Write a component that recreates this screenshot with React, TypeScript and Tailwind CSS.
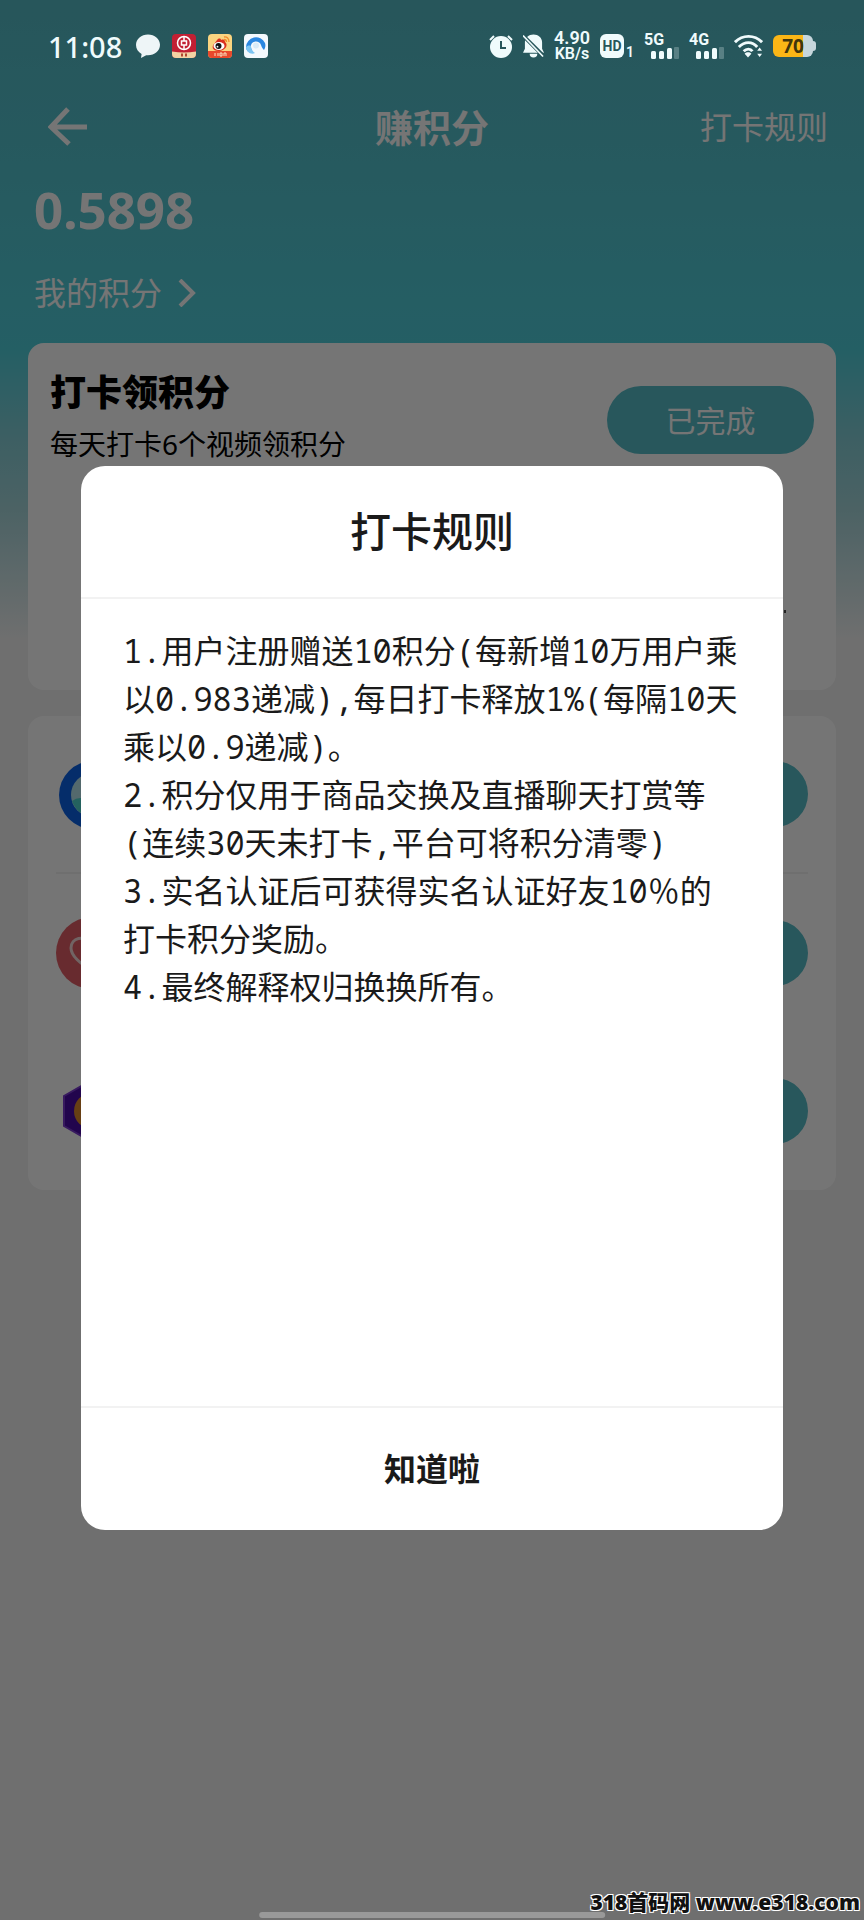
import { useState } from "react";
import type { ReactNode } from "react";

type Task = {
  id: string;
  label: string;
  icon: ReactNode;
};

const rules = [
  "1.用户注册赠送10积分(每新增10万用户乘以0.983递减),每日打卡释放1%(每隔10天乘以0.9递减)。",
  "2.积分仅用于商品交换及直播聊天打赏等(连续30天未打卡,平台可将积分清零)",
  "3.实名认证后可获得实名认证好友10％的打卡积分奖励。",
  "4.最终解释权归换换所有。",
];

const tasks: Task[] = [
  { id: "browse", label: "浏览", icon: <RingIcon /> },
  { id: "like", label: "点赞", icon: <HeartIcon /> },
  { id: "coin", label: "积分", icon: <HexIcon /> },
];

export default function App() {
  const [open, setOpen] = useState(true);

  return (
    <div className="relative flex min-h-screen flex-col bg-[#f2f2f2] bg-[linear-gradient(to_bottom,#55bbc6_0px,#54c5d0_180px,#50cfdb_350px,#86d0d7_440px,#a6d6db_510px,#f2f2f2_640px)] font-['Noto_Sans','Noto_Sans_CJK_SC',sans-serif]">
      <StatusBar />

      <header className="flex h-[118px] items-center justify-between px-9 text-white">
        <button type="button" aria-label="返回" className="flex w-32 justify-start pl-3">
          <svg width="40" height="40" viewBox="0 0 40 40" fill="none" stroke="currentColor" strokeWidth="5">
            <path d="M20 2 3 20l18 17M3 20h36" />
          </svg>
        </button>
        <h1 className="text-[38px] leading-none font-bold">赚积分</h1>
        <button type="button" onClick={() => setOpen(true)} className="w-32 text-[32px] leading-none whitespace-nowrap">
          打卡规则
        </button>
      </header>

      <section className="flex flex-col items-start pl-[34px] text-white">
        <p className="text-[51px] leading-[46px] font-bold">0.5898</p>
        <a href="#points" className="mt-10 flex items-center gap-4 text-[32px] leading-[42px]">
          我的积分
          <svg width="18" height="28" viewBox="0 0 18 28" fill="none" stroke="currentColor" strokeWidth="4">
            <path d="m2 1 13 13L2 27" />
          </svg>
        </a>
      </section>

      <section className="mx-7 mt-[29px] flex min-h-[347px] flex-col rounded-2xl bg-white px-[22px]">
        <div className="flex items-start justify-between pt-7">
          <div className="text-black">
            <h2 className="text-[36px] leading-[44px] font-black">打卡领积分</h2>
            <p className="mt-2 text-[28px] leading-[42px]">每天打卡6个视频领积分</p>
          </div>
          <button type="button" className="mt-[15px] h-[68px] w-[207px] rounded-full bg-[#57bdc8] text-[30px] text-white">
            已完成
          </button>
        </div>
        <span className="mt-auto mr-7 mb-[77px] ml-auto h-[3px] w-0.5 bg-black/70" />
      </section>

      <ul className="mx-7 mt-[26px] rounded-2xl bg-white px-7">
        {tasks.map((task) => (
          <li key={task.id} className="flex h-[158px] items-center justify-between first:border-b-2 first:border-[#f2f2f2]">
            {task.icon}
            <button type="button" aria-label={task.label} className="h-[66px] w-[207px] rounded-full bg-[#57bdc8]" />
          </li>
        ))}
      </ul>

      {open ? <RulesDialog onClose={() => setOpen(false)} /> : null}

      <div className="absolute bottom-[2px] left-1/2 h-1.5 w-2/5 -translate-x-1/2 rounded-full bg-[#999999]" />
      <p className="absolute right-1 bottom-1 text-[21px] leading-7 font-black whitespace-nowrap text-[#111111] [text-shadow:1px_1px_0_#fff,-1px_1px_0_#fff,1px_-1px_0_#fff,-1px_-1px_0_#fff]">
        318首码网 www.e318.com
      </p>
    </div>
  );
}

function RulesDialog({ onClose }: { onClose: () => void }) {
  return (
    <div className="absolute inset-0 flex items-center justify-center bg-black/54 px-[81px] pt-19">
      <div role="dialog" aria-labelledby="rules-title" className="w-full rounded-3xl bg-white text-[#1a1a1a]">
        <h2 id="rules-title" className="border-b-2 border-[#f2f2f2] py-[41px] text-center text-[41px] leading-[49px] font-medium">
          打卡规则
        </h2>
        <div className="min-h-[807px] px-[42px] pt-7 font-['Noto_Sans_Mono','Liberation_Mono','Noto_Sans_CJK_SC',monospace] text-[32px] leading-[48px]">
          {rules.map((rule) => (
            <p key={rule}>{rule}</p>
          ))}
        </div>
        <button type="button" onClick={onClose} className="w-full border-t-2 border-[#f2f2f2] py-9 text-[32px] leading-[50px] font-bold">
          知道啦
        </button>
      </div>
    </div>
  );
}

function StatusBar() {
  return (
    <div className="relative z-10 flex items-center justify-between px-12 pt-6 text-[#f0fbfc]">
      <div className="flex h-11 items-center gap-3">
        <span className="mr-0.5 text-[29px] leading-none font-medium">11:08</span>
        <svg width="24" height="24" viewBox="0 0 24 24" fill="#eef5f7">
          <path d="M12 .5C5.400.5 0 5 0 11c0 4 2.200 7 5.600 8.900L5 24l5.200-2.800c.6.1 1.200.1 1.800.1 6.600 0 12-4.600 12-10.500S18.600.5 12 .5Z" />
        </svg>
        <BankIcon />
        <WeiboIcon />
        <BrowserIcon />
      </div>

      <div className="flex h-11 items-center gap-2.5">
        <svg width="24" height="24" viewBox="0 0 24 24">
          <circle cx="12" cy="13" r="11" fill="currentColor" />
          <path d="m1 6 4-4m14 0 4 4" stroke="currentColor" strokeWidth="2" />
          <path d="M12 7v7h5" fill="none" stroke="#27565b" strokeWidth="2" />
        </svg>
        <svg width="21" height="24" viewBox="0 0 22 24">
          <path d="M11 0c5 0 9 3.500 9 8v7l2 4H0l2-4V8c0-4.500 4-8 9-8ZM7 20h8a4 4 0 0 1-8 0Z" fill="currentColor" />
          <path d="m0 1 22 22" stroke="#27565b" strokeWidth="4" />
          <path d="m0 1 21 22" stroke="currentColor" strokeWidth="1.800" />
        </svg>
        <div className="flex flex-col items-center font-[Roboto,sans-serif] text-[16px] leading-4 font-semibold">
          <span className="text-[18px]">4.90</span>
          <span>KB/s</span>
        </div>
        <div className="flex items-end gap-0.5 font-[Roboto,sans-serif]">
          <span className="flex size-6 items-center justify-center rounded-md bg-[#f0fbfc] text-[14px] font-bold text-[#27565b]">HD</span>
          <span className="text-[14px] leading-3 font-semibold">1</span>
        </div>
        <Signal label="5G" />
        <Signal label="4G" />
        <svg width="29" height="24" viewBox="0 0 30 24" fill="none" stroke="currentColor" strokeWidth="3">
          <path d="M1 8c8-8 20-8 28 0M5 13c6-6 14-6 19 0M10 17.500c3-3 7-3 9 0" />
          <path d="m11 20 3.500 4 3.500-4c-2-2-5-2-7 0Z" fill="currentColor" stroke="none" />
          <path d="m24 17 2.500-3.500L29 17Zm0 3 2.500 3.500L29 20Z" fill="currentColor" stroke="none" />
        </svg>
        <div className="flex items-center">
          <span className="flex h-[22px] w-10 items-center justify-center rounded-md bg-[linear-gradient(to_right,#fbb616_75%,#c6d6dc_75%)] text-[19px] leading-none font-bold text-[#40350c]">
            70
          </span>
          <span className="h-2.5 w-[3px] rounded-r-sm bg-[#c6d6dc]" />
        </div>
      </div>
    </div>
  );
}

function Signal({ label }: { label: string }) {
  return (
    <div className="flex w-[35px] flex-col">
      <span className="font-[Roboto,sans-serif] text-[16px] leading-[14px] font-bold">{label}</span>
      <svg width="35" height="12" viewBox="0 0 35 12" fill="currentColor">
        <rect x="7" y="4" width="5" height="8" rx="1.500" />
        <rect x="15" y="4" width="5" height="8" rx="1.500" />
        <rect x="23" y="1" width="5" height="11" rx="1.500" />
        <rect x="30" y="0" width="5" height="12" rx="1" opacity=".25" />
      </svg>
    </div>
  );
}

function BankIcon() {
  return (
    <svg width="24" height="24" viewBox="0 0 24 24">
      <rect width="24" height="24" rx="4" fill="#c21f33" />
      <path d="M0 17.500q12 2 24 0V20a4 4 0 0 1-4 4H4a4 4 0 0 1-4-4Z" fill="#f3d3a4" />
      <g fill="none" stroke="#fff" strokeWidth="1.500">
        <circle cx="12" cy="9" r="6.500" />
        <rect x="9.500" y="7" width="5" height="4" />
        <path d="M12 2.500V7m0 4v4.500" />
      </g>
      <path d="M9 19.500h2v3H9zm4 0h2v3h-2z" fill="#b0472f" />
    </svg>
  );
}

function WeiboIcon() {
  return (
    <svg width="24" height="24" viewBox="0 0 24 24">
      <rect width="24" height="24" rx="4" fill="#fbd480" />
      <path d="M0 17h24v3a4 4 0 0 1-4 4H4a4 4 0 0 1-4-4Z" fill="#e9482c" />
      <path d="M10 5c2-1 3 0 3 1 3-1 4 0 4 2 3 2 2 8-6 9-7 0-8-5-4-8 1-2 2-3 3-4Z" fill="#d9301f" />
      <ellipse cx="11" cy="12" rx="5.500" ry="4" fill="#fff" />
      <circle cx="10.500" cy="12" r="3" fill="#161616" />
      <circle cx="9.500" cy="12.700" r=".9" fill="#fff" />
      <path d="M16 3c3-.500 5 1.500 5 5m-5-2.500c1.500 0 2.500 1 2.500 2.500" fill="none" stroke="#ef8b2c" strokeWidth="1.300" />
      <path d="M7 19v3m3-3v3m2-3h2v3h-2Zm4 3v-3h2v3" fill="none" stroke="#fbe3c5" />
    </svg>
  );
}

function BrowserIcon() {
  return (
    <svg width="24" height="24" viewBox="0 0 24 24">
      <rect width="24" height="24" rx="4" fill="#f4f9fd" />
      <path d="M2 13a10 10 0 0 1 19-4c1 3 0 5-1 7-1-1-2-2-3-5-1-4-8-5-10 0-.5 3 1 5 2 7-4 2-7-2-7-5Z" fill="#2b87e0" />
      <path d="M2 13c0 5 5 8 9 6-3-2-4-4-4-7-2-1-4 0-5 1Z" fill="#7cc4f2" />
      <circle cx="12" cy="11.500" r="3" fill="#d9ebf8" />
    </svg>
  );
}

function RingIcon() {
  return (
    <svg width="72" height="72" viewBox="0 0 72 72">
      <circle cx="37" cy="37" r="34" fill="#0d62e6" />
      <circle cx="37" cy="37" r="22" fill="#b8e4ee" />
      <path d="M16 43q9-7 20 2v14q-15-2-20-16Z" fill="#4fd6cf" />
    </svg>
  );
}

function HeartIcon() {
  return (
    <svg width="72" height="72" viewBox="0 0 72 72">
      <circle cx="36" cy="36" r="36" fill="#e25f66" />
      <path d="M36 54C24 46 15 39 15 31c0-10 13-14 21-4 8-10 21-6 21 4 0 8-9 15-21 23Z" fill="none" stroke="#f6dada" strokeWidth="3" />
    </svg>
  );
}

function HexIcon() {
  return (
    <svg width="72" height="72" viewBox="0 0 72 72">
      <path d="M36 5 64 21v30L36 67 8 51V21Z" fill="#4a0ba8" stroke="#7a3ad0" strokeWidth="2" />
      <circle cx="36" cy="36" r="18" fill="#e08a2c" />
    </svg>
  );
}
